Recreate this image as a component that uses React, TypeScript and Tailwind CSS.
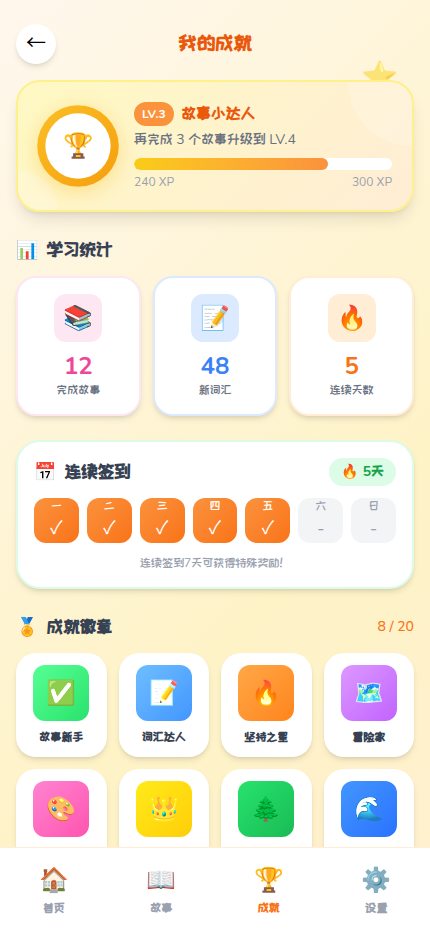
import clsx from "clsx";

interface Stat {
	icon: string;
	value: number;
	label: string;
	border: string;
	iconBg: string;
	color: string;
}

interface Badge {
	icon: string;
	name: string;
	gradient: string;
}

const stats: Stat[] = [
	{ icon: "📚", value: 12, label: "完成故事", border: "border-[#fce7f3]", iconBg: "bg-[#fce7f3]", color: "text-[#ec4899]" },
	{ icon: "📝", value: 48, label: "新词汇", border: "border-[#dbeafe]", iconBg: "bg-[#dbeafe]", color: "text-[#3b82f6]" },
	{ icon: "🔥", value: 5, label: "连续天数", border: "border-[#ffedd5]", iconBg: "bg-[#ffedd5]", color: "text-[#f97316]" },
];

const days = [
	{ label: "一", done: true },
	{ label: "二", done: true },
	{ label: "三", done: true },
	{ label: "四", done: true },
	{ label: "五", done: true },
	{ label: "六", done: false },
	{ label: "日", done: false },
];

const badges: Badge[] = [
	{ icon: "✅", name: "故事新手", gradient: "from-[#4ade80] to-[#22c55e]" },
	{ icon: "📝", name: "词汇达人", gradient: "from-[#60a5fa] to-[#3b82f6]" },
	{ icon: "🔥", name: "坚持之星", gradient: "from-[#fb923c] to-[#f97316]" },
	{ icon: "🗺️", name: "冒险家", gradient: "from-[#c084fc] to-[#a855f7]" },
	{ icon: "🎨", name: "小画家", gradient: "from-[#f472b6] to-[#ec4899]" },
	{ icon: "👑", name: "故事王", gradient: "from-[#facc15] to-[#eab308]" },
	{ icon: "🌲", name: "森林之友", gradient: "from-[#22c55e] to-[#16a34a]" },
	{ icon: "🌊", name: "海洋之心", gradient: "from-[#3b82f6] to-[#2563eb]" },
];

const navItems = [
	{ icon: "🏠", label: "首页", active: false },
	{ icon: "📖", label: "故事", active: false },
	{ icon: "🏆", label: "成就", active: true },
	{ icon: "⚙️", label: "设置", active: false },
];

function SectionTitle({ icon, title }: { icon: string; title: string }) {
	return (
		<h2 className="flex items-center gap-2 font-[Nunito,'ZCOOL_KuaiLe','Noto_Color_Emoji','Noto_Sans_CJK_SC',sans-serif] text-lg font-bold text-gray-700">
			<span>{icon}</span>
			{title}
		</h2>
	);
}

function LevelCard() {
	return (
		<section className="relative">
			<span className="absolute -top-5 right-4 text-3xl opacity-60">⭐</span>
			<div className="relative flex items-center gap-4 overflow-hidden rounded-3xl border-2 border-[#fef08a] bg-linear-135 from-[#fef9c3] to-[#ffedd5] p-5 shadow-lg">
				<span className="absolute -top-16 -right-16 size-32 rounded-full bg-white/20" />
				<span className="absolute -bottom-10 -left-10 size-20 rounded-full bg-white/20" />
				<div className="relative flex size-20 shrink-0 scale-102 items-center justify-center rounded-full bg-linear-to-br from-[#fbbf24] to-[#f59e0b] shadow-[0_4px_20px_rgba(251,191,36,0.4)]">
					<div className="flex size-16 items-center justify-center rounded-full bg-white text-2xl">🏆</div>
				</div>
				<div className="relative flex-1">
					<div className="flex items-center gap-2">
						<span className="rounded-full bg-[#fb923c] px-2 py-1 text-xs font-bold text-white">LV.3</span>
						<span className="text-base font-bold text-[#ea580c]">故事小达人</span>
					</div>
					<p className="mt-1 text-sm text-gray-500">再完成 3 个故事升级到 LV.4</p>
					<div className="mt-2 h-3 overflow-hidden rounded-full bg-white">
						<div
							className="h-full rounded-full bg-linear-to-r from-[#facc15] to-[#fb923c]"
							style={{ width: "75%" }}
						/>
					</div>
					<div className="mt-1 flex justify-between text-xs text-gray-400">
						<span>240 XP</span>
						<span>300 XP</span>
					</div>
				</div>
			</div>
		</section>
	);
}

function StatCard({ stat }: { stat: Stat }) {
	return (
		<div className={clsx("flex flex-col items-center rounded-[20px] border-2 bg-white p-4 shadow-md", stat.border)}>
			<div className={clsx("flex size-12 items-center justify-center rounded-xl text-2xl", stat.iconBg)}>
				{stat.icon}
			</div>
			<div className={clsx("mt-2 text-2xl font-bold", stat.color)}>{stat.value}</div>
			<div className="text-xs text-gray-500">{stat.label}</div>
		</div>
	);
}

function CheckInCard() {
	return (
		<section className="rounded-3xl border-2 border-[#dcfce7] bg-white p-4 shadow-md">
			<div className="mb-3 flex items-center justify-between">
				<SectionTitle icon="📅" title="连续签到" />
				<span className="rounded-full bg-[#dcfce7] px-3 py-1 font-[Nunito,'ZCOOL_KuaiLe','Noto_Color_Emoji','Noto_Sans_CJK_SC',sans-serif] text-sm font-bold text-[#16a34a]">
					🔥 5天
				</span>
			</div>
			<div className="grid grid-cols-7 gap-2">
				{days.map((day) => (
					<div
						key={day.label}
						className={clsx(
							"flex aspect-square flex-col items-center rounded-xl",
							day.done
								? "bg-linear-to-br from-[#fb923c] to-[#f97316] text-white"
								: "bg-gray-100 text-gray-400",
						)}
					>
						<span className="text-xs">{day.label}</span>
						<span className="text-lg">{day.done ? "✓" : "-"}</span>
					</div>
				))}
			</div>
			<p className="mt-3 text-center text-xs text-gray-400">
				连续签到7天可获得特殊奖励
				<span className="pr-2 font-['ZCOOL_KuaiLe','Noto_Sans_CJK_SC',sans-serif] leading-none">!</span>
			</p>
		</section>
	);
}

function BadgeCard({ badge }: { badge: Badge }) {
	return (
		<div className="flex flex-col items-center rounded-[20px] bg-white p-3 shadow-md">
			<div
				className={clsx(
					"flex size-14 items-center justify-center rounded-xl bg-linear-to-br text-2xl brightness-115",
					badge.gradient,
				)}
			>
				{badge.icon}
			</div>
			<span className="mt-2 text-xs font-bold text-gray-700">{badge.name}</span>
		</div>
	);
}

function BottomNav() {
	return (
		<nav className="fixed inset-x-0 bottom-0 grid grid-cols-4 border-t border-[#ffedd5] bg-white py-4">
			{navItems.map((item) => (
				<a
					key={item.label}
					href="#"
					className={clsx(
						"flex flex-col items-center gap-1 text-xs font-bold",
						item.active ? "text-[#f97316]" : "text-gray-400",
					)}
				>
					<span className="text-2xl">{item.icon}</span>
					{item.label}
				</a>
			))}
		</nav>
	);
}

export default function App() {
	return (
		<div
			lang="zh-CN"
			className="min-h-screen bg-linear-135 from-[#fff7ed] via-[#fef3c7] via-62% to-[#ffedd5] to-125% font-[Nunito,'ZCOOL_KuaiLe','Noto_Sans_CJK_SC',sans-serif]"
		>
			<main className="flex flex-col gap-6 px-4 pt-6 pb-24">
				<div className="flex flex-col gap-4">
					<header className="flex items-center justify-between">
						<button
							type="button"
							aria-label="返回"
							className="flex size-10 items-center justify-center rounded-full bg-white text-xl shadow-md"
						>
							←
						</button>
						<h1 className="text-xl font-bold text-[#ea580c]">我的成就</h1>
						<div className="w-10" />
					</header>
					<LevelCard />
				</div>

				<section>
					<SectionTitle icon="📊" title="学习统计" />
					<div className="mt-3 grid grid-cols-3 gap-3">
						{stats.map((stat) => (
							<StatCard key={stat.label} stat={stat} />
						))}
					</div>
				</section>

				<CheckInCard />

				<section>
					<div className="flex items-center justify-between">
						<SectionTitle icon="🏅" title="成就徽章" />
						<span className="text-sm font-medium text-[#f97316]">8 / 20</span>
					</div>
					<div className="mt-3 grid grid-cols-4 gap-3">
						{badges.map((badge) => (
							<BadgeCard key={badge.name} badge={badge} />
						))}
					</div>
				</section>
			</main>
			<BottomNav />
		</div>
	);
}
